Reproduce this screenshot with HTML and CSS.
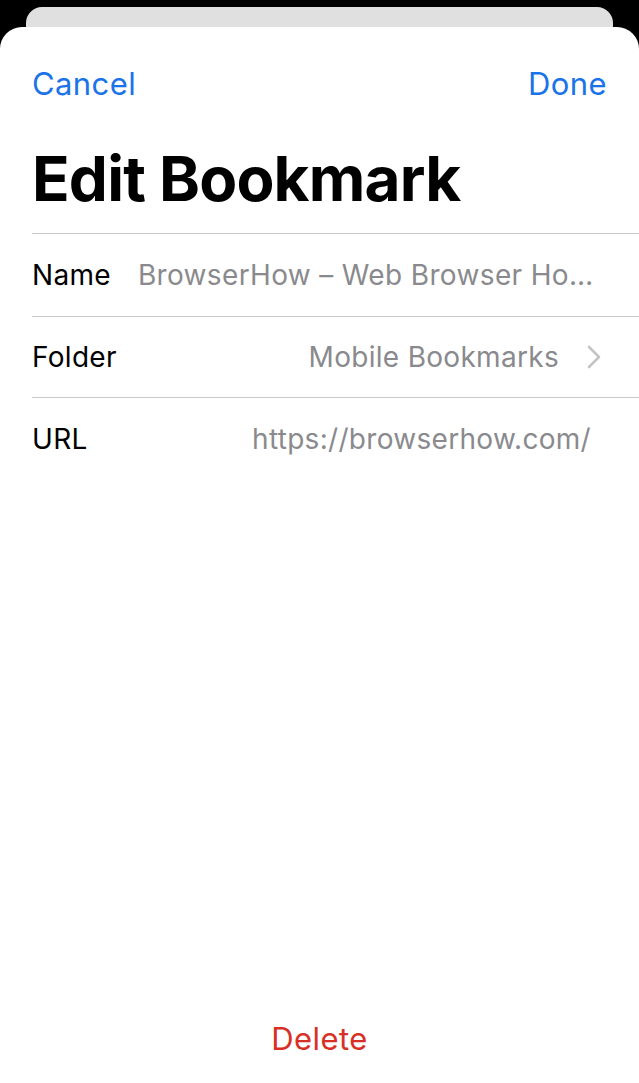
FILE: index.html
```html
<!DOCTYPE html>
<html>
<head>
<meta charset="utf-8">
<link rel="stylesheet" href="styles.css">
</head>
<body>
<div class="back-card"></div>
<div class="sheet">
  <div class="nav">
    <span class="nav-btn">Cancel</span>
    <span class="nav-btn">Done</span>
  </div>
  <h1 class="title">Edit Bookmark</h1>
  <div class="list">
    <div class="row">
      <span class="label">Name</span>
      <span class="value value-name">BrowserHow – Web Browser Ho…</span>
    </div>
    <div class="row row-mid">
      <span class="label">Folder</span>
      <span class="value value-right">Mobile Bookmarks</span>
      <svg class="chevron" width="14" height="24" viewBox="0 0 14 24"><path d="M2 2 L12 12 L2 22" fill="none" stroke="#c4c4c6" stroke-width="2.6" stroke-linecap="round" stroke-linejoin="round"/></svg>
    </div>
    <div class="row row-last">
      <span class="label">URL</span>
      <span class="value value-right value-url">https://browserhow.com/</span>
    </div>
  </div>
  <div class="spacer"></div>
  <div class="delete">Delete</div>
</div>
</body>
</html>
```
FILE: styles.css
```css
html, body {
  margin: 0;
  padding: 0;
  background: #000;
  font-family: Inter, "Noto Sans", sans-serif;
}
body {
  height: 1083px;
  overflow: hidden;
}
.back-card {
  margin: 7px 26px 0;
  height: 20px;
  background: #e0e0e0;
  border-radius: 16px 16px 0 0;
}
.sheet {
  background: #fff;
  border-radius: 22px 22px 0 0;
  height: 1056px;
  display: flex;
  flex-direction: column;
}
.nav {
  display: flex;
  justify-content: space-between;
  padding: 36px 32px 0;
  height: 40px;
  align-items: center;
}
.nav-btn {
  color: #1a73e8;
  font-size: 31px;
  letter-spacing: 0.4px;
}
.title {
  margin: 0;
  padding: 39px 32px 0;
  font-size: 62px;
  font-weight: 700;
  letter-spacing: -0.8px;
  line-height: 74px;
  height: 91px;
  color: #000;
}
.list {
  margin-left: 32px;
  border-top: 1px solid #c8c8cc;
}
.row {
  display: flex;
  align-items: center;
  height: 82px;
  border-bottom: 1px solid #c8c8cc;
  padding-right: 48px;
  font-size: 28px;
  letter-spacing: 0.3px;
  white-space: nowrap;
}
.row-mid {
  height: 80px;
}
.row-last {
  border-bottom: none;
}
.label {
  color: #000;
}
.value {
  color: #8a8a8e;
}
.value-name {
  margin-left: 27px;
  letter-spacing: 0.35px;
}
.value-right {
  margin-left: auto;
}
.chevron {
  margin-left: 28px;
  margin-right: -10px;
}
.spacer {
  flex: 1;
}
.delete {
  text-align: center;
  color: #d93025;
  font-size: 31px;
  letter-spacing: 0.4px;
  padding-bottom: 26px;
}
```
